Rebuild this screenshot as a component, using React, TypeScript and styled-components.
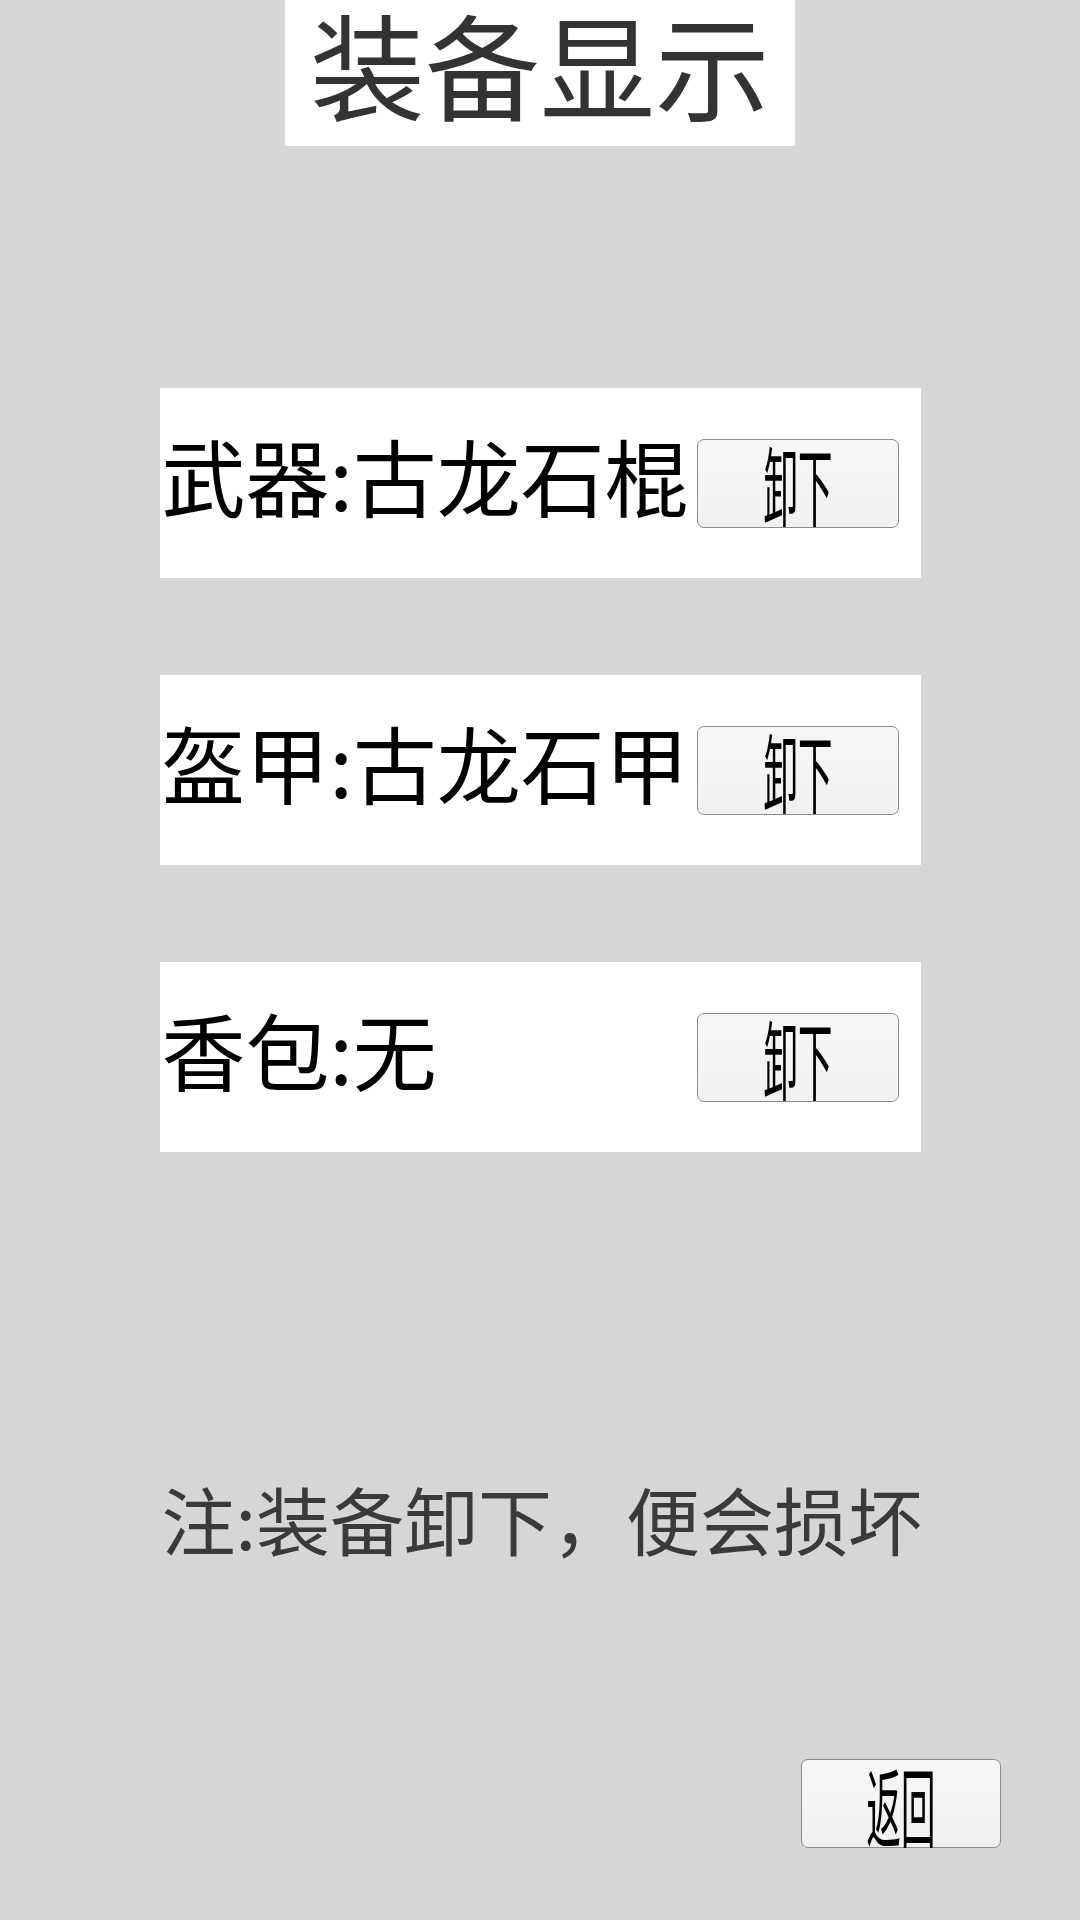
import React from "react";
import styled, { createGlobalStyle } from "styled-components";

const GlobalStyle = createGlobalStyle`
  html, body {
    margin: 0;
    padding: 0;
    background: #d6d6d6;
  }
  body {
    font-family: "Noto Sans CJK SC", "Noto Sans", sans-serif;
  }
`;

const Page = styled.div`
  width: 1080px;
  min-height: 1920px;
  display: flex;
  flex-direction: column;
  align-items: center;
  background: #d6d6d6;
`;

const TitleBox = styled.h1`
  margin: 0;
  width: 510px;
  height: 146px;
  box-sizing: border-box;
  padding-bottom: 22px;
  display: flex;
  align-items: center;
  justify-content: center;
  background: #ffffff;
  color: #333333;
  font-size: 115px;
  font-weight: 400;
  line-height: 1.2;
  white-space: nowrap;
`;

const List = styled.div`
  margin-top: 242px;
  width: 761px;
  display: flex;
  flex-direction: column;
  gap: 97px;
`;

const Row = styled.div`
  height: 190px;
  background: #ffffff;
  display: flex;
  align-items: center;
  justify-content: space-between;
  padding: 0 22px 0 2px;
  box-sizing: border-box;
`;

const ItemText = styled.span`
  margin-bottom: 16px;
  font-size: 84px;
  line-height: 1.2;
  color: #000000;
  white-space: nowrap;
`;

const PlainButton = styled.button<{ $width: number }>`
  width: ${(p) => p.$width}px;
  height: 89px;
  flex: none;
  padding: 0;
  margin: 0;
  display: flex;
  align-items: center;
  justify-content: center;
  overflow: visible;
  background: linear-gradient(#f7f7f7, #f1f1f1);
  border: 1px solid #8c8c8c;
  border-radius: 7px;
  font-family: "Noto Sans CJK SC", "Noto Sans", sans-serif;
  color: #000000;
  cursor: pointer;
`;

const NarrowLabel = styled.span`
  display: inline-block;
  font-size: 86px;
  line-height: 1;
  transform: scaleX(0.4);
  white-space: nowrap;
`;

const Note = styled.p`
  margin: 329px 0 0;
  width: 761px;
  padding-left: 2px;
  box-sizing: border-box;
  font-size: 74px;
  line-height: 1;
  color: #3a3a3a;
  white-space: nowrap;
`;

const Footer = styled.div`
  margin-top: 204px;
  width: 1080px;
  display: flex;
  justify-content: flex-end;
  padding-right: 79px;
  box-sizing: border-box;
`;

const items = [
  { label: "武器:古龙石棍" },
  { label: "盔甲:古龙石甲" },
  { label: "香包:无" },
];

export default function App() {
  return (
    <>
      <GlobalStyle />
      <Page>
        <TitleBox>装备显示</TitleBox>
        <List>
          {items.map((item) => (
            <Row key={item.label}>
              <ItemText>{item.label}</ItemText>
              <PlainButton $width={202}>
                <NarrowLabel>卸下</NarrowLabel>
              </PlainButton>
            </Row>
          ))}
        </List>
        <Note>注:装备卸下，便会损坏</Note>
        <Footer>
          <PlainButton $width={200}>
            <NarrowLabel>返回</NarrowLabel>
          </PlainButton>
        </Footer>
      </Page>
    </>
  );
}
